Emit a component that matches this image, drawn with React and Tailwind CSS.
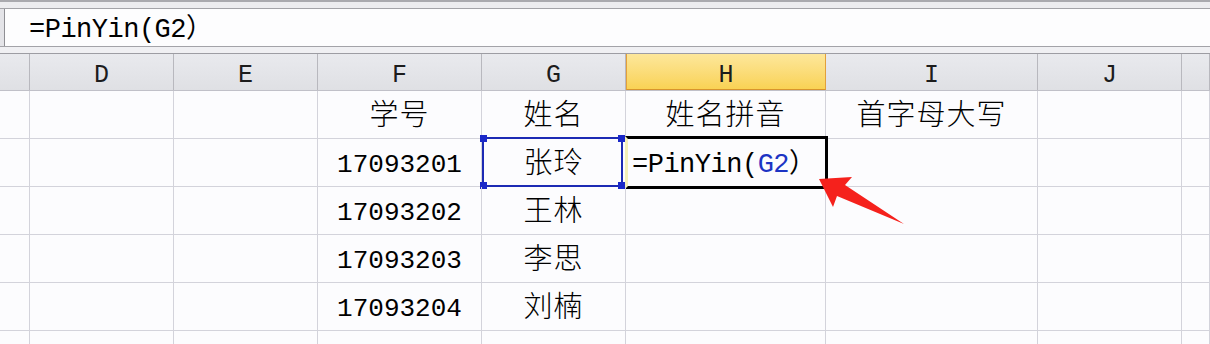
import React from "react";

const mono = "font-['Liberation_Mono','Noto_Sans_CJK_SC',monospace]";
const cols = ["", "D", "E", "F", "G", "H", "I", "J", ""];
const widths = ["w-[30px]", "w-[144px]", "w-[144px]", "w-[164px]", "w-[144px]", "w-[200px]", "w-[212px]", "w-[144px]", "flex-1"];

const rows = [
  ["", "", "", "学号", "姓名", "姓名拼音", "首字母大写", "", ""],
  ["", "", "", "17093201", "张玲", "formula", "", "", ""],
  ["", "", "", "17093202", "王林", "", "", "", ""],
  ["", "", "", "17093203", "李思", "", "", "", ""],
  ["", "", "", "17093204", "刘楠", "", "", "", ""],
  ["", "", "", "", "", "", "", "", ""],
];

const isCjk = (s) => /[\u4e00-\u9fff]/.test(s);

function Handle({ className }) {
  return <span className={`absolute w-[7px] h-[7px] bg-[#1a28c8] ${className}`} />;
}

function Cell({ value, col, row }) {
  const selected = row === 1 && col === 4;
  const active = row === 1 && col === 5;
  return (
    <div
      className={`relative ${widths[col]} shrink-0 h-full border-r border-[#d3d3db] flex items-center pt-[6px] ${
        value === "formula" ? "justify-start pl-[6px]" : "justify-center"
      }`}
    >
      {value === "formula" ? (
        <span className="text-[27px] text-black tracking-[-0.5px]">
          =PinYin(<span className="text-[#1c34c4]">G2</span>）
        </span>
      ) : (
        <span className={`${isCjk(value) ? "text-[29px] tracking-[1px] font-light" : "text-[26px]"} text-black`}>{value}</span>
      )}
      {selected && (
        <div className="absolute left-0 top-[-2px] right-[2px] bottom-[-1px] border-2 border-[#1c2ab4]">
          <Handle className="left-[-4px] top-[-4px]" />
          <Handle className="left-[-4px] bottom-[-4px]" />
          <Handle className="right-[-4px] top-[-4px]" />
          <Handle className="right-[-4px] bottom-[-4px]" />
        </div>
      )}
      {active && (
        <div className="absolute left-[-1px] top-[-3px] right-[-3px] bottom-[-3px] border-[3px] border-black border-l-[3px] border-l-[#f3efb8]" />
      )}
    </div>
  );
}

export default function App() {
  return (
    <div className={`w-[1210px] h-[344px] overflow-hidden bg-[#fcfcfe] ${mono}`}>
      {/* top strip */}
      <div className="h-[8px] bg-[#ececef] border-t-2 border-[#a9a9ae]" />
      {/* formula bar */}
      <div className="h-[39px] flex border-y border-[#a3a3a8] bg-[#e4e4e8]">
        <div className="w-[4px]" />
        <div className="flex-1 bg-[#fdfdfe] border-l border-[#8f8f94] flex items-center pl-[24px] pt-[5px]">
          <span className="text-[27px] text-black tracking-[-0.5px]">=PinYin(G2）</span>
        </div>
      </div>
      <div className="h-[7px] bg-[#f0f0f3] border-b border-[#9d9da3]" />
      {/* column headers */}
      <div className="h-[37px] flex border-b border-[#c0c0c8]">
        {cols.map((c, i) => (
          <div
            key={i}
            className={`${widths[i]} shrink-0 h-full flex items-center justify-center pt-[8px] text-[25px] ${
              c === "H"
                ? "bg-gradient-to-b from-[#fde79a] to-[#f9d253] border-x border-[#e2a03a] border-b border-b-[#d8942c]"
                : "bg-gradient-to-b from-[#e9eaee] to-[#dfe0e4] border-r border-[#b8b8be]"
            } text-[#1c1c1c]`}
          >
            {c}
          </div>
        ))}
      </div>
      {/* rows */}
      {rows.map((r, ri) => (
        <div key={ri} className="h-[48px] flex border-b border-[#d3d3db]">
          {r.map((v, ci) => (
            <Cell key={ci} value={v} col={ci} row={ri} />
          ))}
        </div>
      ))}
      {/* arrow */}
      <svg className="absolute left-0 top-0 pointer-events-none" width="1210" height="344">
        <polygon
          points="819,179 852,177 845,185 904,224 837,196 833,207"
          fill="#f5211c"
        />
      </svg>
    </div>
  );
}
